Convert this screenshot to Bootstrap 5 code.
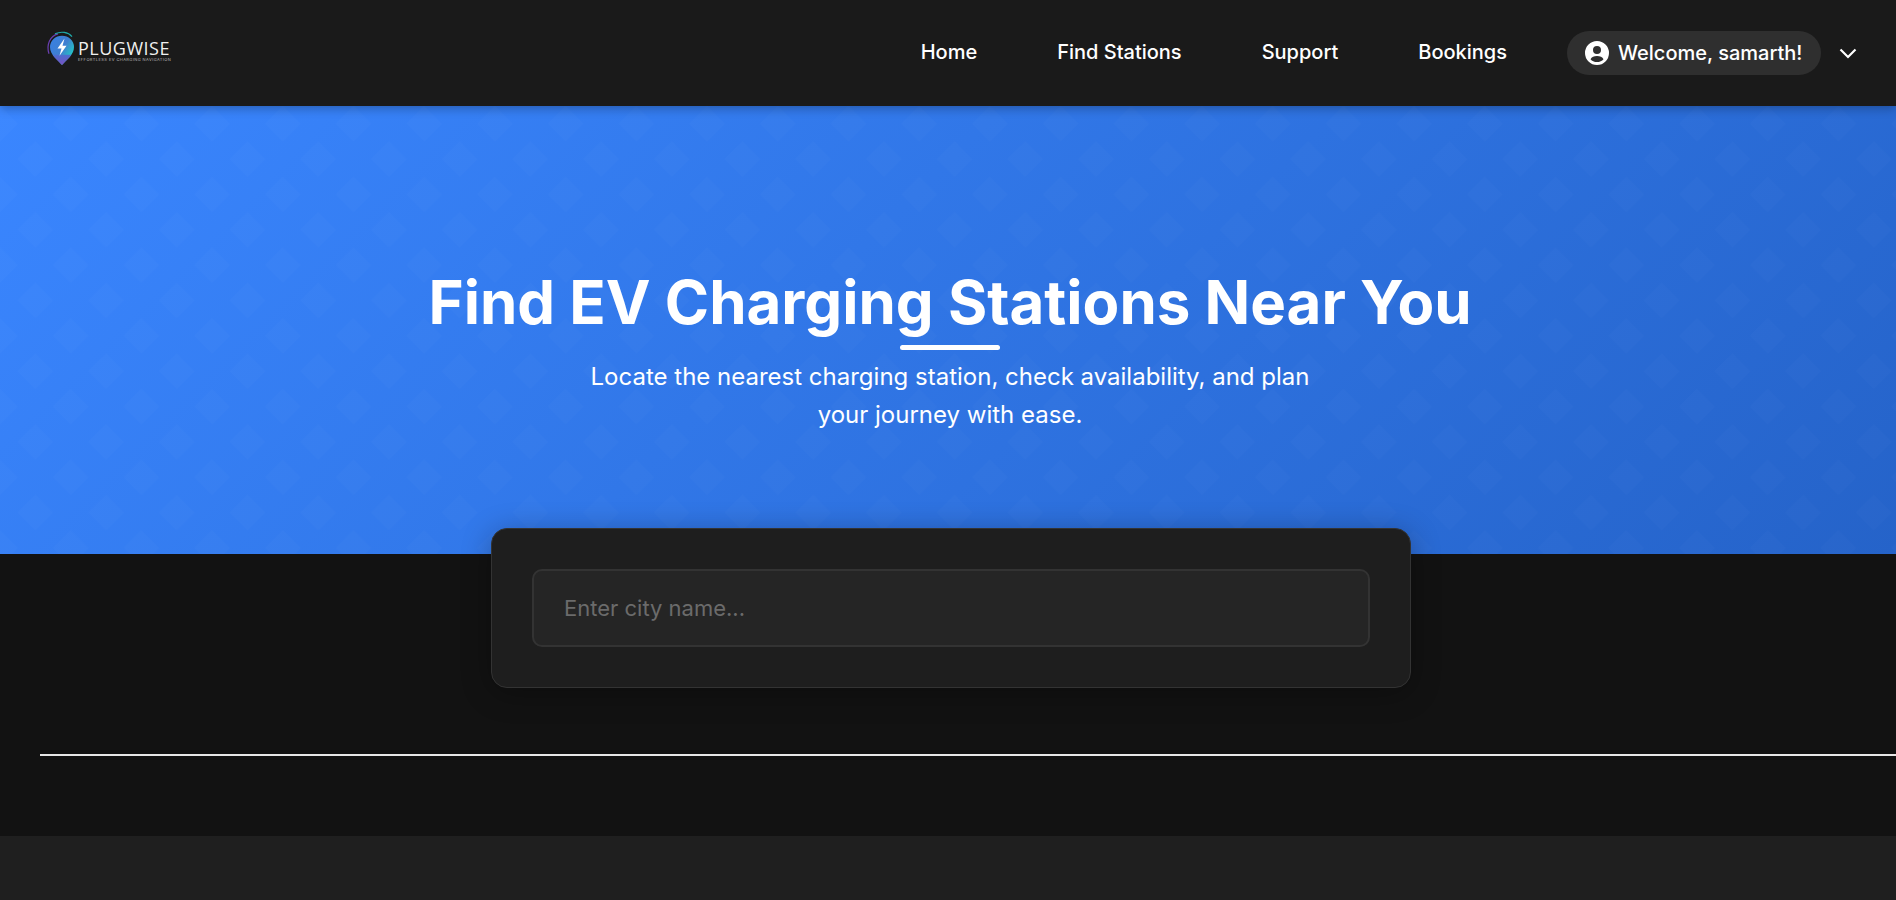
<!DOCTYPE html>
<html lang="en">
<head>
    <meta charset="UTF-8">
    <meta name="viewport" content="width=device-width, initial-scale=1.0">
    <title>Plugwise</title>
    <link href="https://cdn.jsdelivr.net/npm/bootstrap@5.3.0/dist/css/bootstrap.min.css" rel="stylesheet">
    <style>
        body {
            font-family: Inter, "Liberation Sans", sans-serif;
            background: #121212;
            color: #fff;
            overflow-x: hidden;
        }
        .top-bar {
            height: 106px;
            padding: 0 39px 0 46px;
            background: #1a1a1a;
            box-shadow: 0 2px 10px rgba(0, 0, 0, .3);
            position: relative;
            z-index: 5;
        }
        .logo-link { margin-top: -8px; }
        .brand-name {
            font-family: "Open Sans", sans-serif;
            font-size: 18px;
            font-weight: 500;
            line-height: 18px;
            letter-spacing: .5px;
            color: #f0f0f0;
        }
        .brand-tag {
            font-size: 4px;
            line-height: 6px;
            letter-spacing: .42px;
            color: #b8b8b8;
            white-space: nowrap;
        }
        .top-link {
            color: #fff;
            font-size: 20px;
            font-weight: 500;
            line-height: 24px;
            margin-top: -2px;
            text-decoration: none;
        }
        .top-links { gap: 80px; margin-right: 60px; }
        .user-pill {
            height: 44px;
            width: 254px;
            padding-left: 18px;
            gap: 9px;
            background: #2f2f2f;
            border-radius: 22px;
            font-size: 20px;
            font-weight: 500;
        }
        .chevron-btn { margin-left: 18px; width: 18px; }
        .hero {
            height: 448px;
            padding-left: 4px;
            background: linear-gradient(135deg, #3a86ff, #2563c9);
        }
        .hero-pattern { position: absolute; top: 0; left: 0; width: 100%; height: 100%; }
        .hero-title {
            font-size: 60px;
            font-weight: 700;
            line-height: 76px;
            margin: 0;
            position: relative;
        }
        .hero-title::after {
            content: "";
            position: absolute;
            left: 50%;
            bottom: -10px;
            width: 100px;
            height: 5px;
            margin-left: -50px;
            border-radius: 3px;
            background: #fff;
        }
        .hero-sub {
            width: 740px;
            font-size: 24px;
            line-height: 38px;
            margin: 18px 0 0;
        }
        .hero-inner { margin-top: 38px; }
        .search-wrap { padding-left: 6px; }
        .search-box {
            width: 920px;
            height: 160px;
            margin: -26px auto 0;
            padding: 40px;
            background: #1e1e1e;
            border: 1px solid #333;
            border-radius: 16px;
            box-shadow: 0 5px 30px rgba(0, 0, 0, .3);
            position: relative;
        }
        .search-input.form-control {
            height: 78px;
            padding: 0 30px;
            font-size: 22px;
            background: #252525;
            border: 2px solid #333;
            border-radius: 10px;
            color: #fff;
        }
        .search-input.form-control::placeholder { color: #6b6b6b; opacity: 1; }
        .page-rule {
            width: 100%;
            height: 2px;
            margin: 66px 0 0 40px;
            background: #e6e6e6;
            border: 0;
            opacity: 1;
        }
        .page-foot { height: 64px; margin-top: 80px; background: #1f1f1f; }
    </style>
</head>
<body>
    <nav class="navbar top-bar d-flex align-items-center">
        <a class="logo-link d-flex align-items-center text-decoration-none me-auto" href="#">
            <svg width="32" height="36" viewBox="0 0 32 38" preserveAspectRatio="none" class="flex-shrink-0">
                <defs>
                    <linearGradient id="pinFill" x1="0.1" y1="0.1" x2="0.9" y2="0.7">
                        <stop offset="0" stop-color="#3a80e0"/>
                        <stop offset="0.55" stop-color="#3f7fd0"/>
                        <stop offset="1" stop-color="#22c8c4"/>
                    </linearGradient>
                    <linearGradient id="pinLow" x1="0" y1="0" x2="0" y2="1">
                        <stop offset="0" stop-color="#4a6fd0"/>
                        <stop offset="1" stop-color="#7a4fc0"/>
                    </linearGradient>
                </defs>
                <path d="M3 24C0 15 4 5 12 3" fill="none" stroke="#6a3fb0" stroke-width="1.2"/>
                <path d="M9 3C15 0 22 1 26 6" fill="none" stroke="#1fa8a8" stroke-width="1.2"/>
                <path d="M16 36C11 30 4 25 4 17a12 12 0 0 1 24 0C28 25 21 30 16 36Z" fill="url(#pinFill)"/>
                <path d="M16 36C13 32 9 29 6.500 25H25.500C23 29 19 32 16 36Z" fill="url(#pinLow)"/>
                <path d="M18.500 8L11.500 18.500H15.500L13.500 26L20.500 15.500H16.500Z" fill="#fff"/>
            </svg>
            <div class="pt-1">
                <div class="brand-name">PLUGWISE</div>
                <div class="brand-tag">EFFORTLESS EV CHARGING NAVIGATION</div>
            </div>
        </a>
        <div class="d-flex align-items-center top-links">
            <a class="top-link" href="#">Home</a>
            <a class="top-link" href="#">Find Stations</a>
            <a class="top-link" href="#">Support</a>
            <a class="top-link" href="#">Bookings</a>
        </div>
        <div class="d-flex align-items-center user-pill">
            <svg width="24" height="24" viewBox="0 0 24 24">
                <path fill="#fff" fill-rule="evenodd" d="M12 0a12 12 0 1 0 0 24a12 12 0 0 0 0-24ZM12 5a4 4 0 1 1 0 8a4 4 0 0 1 0-8ZM12 15c3 0 5.500 1.200 6.500 3.200C17 20.100 14.700 21 12 21s-5-.9-6.500-2.800C6.500 16.200 9 15 12 15Z"/>
            </svg>
            <span>Welcome, samarth!</span>
        </div>
        <div class="chevron-btn d-flex">
            <svg width="18" height="18" viewBox="0 0 18 18"><path d="M1.500 5.500L9 13L16.500 5.500" fill="none" stroke="#fff" stroke-width="2.200"/></svg>
        </div>
    </nav>

    <section class="hero position-relative overflow-hidden d-flex align-items-center justify-content-center">
        <svg class="hero-pattern">
            <defs>
                <pattern id="diamonds" width="70.71" height="70.71" patternUnits="userSpaceOnUse">
                    <path d="M0 0L17.68 17.68L0 35.36L-17.68 17.68ZM70.71 0L88.39 17.68L70.71 35.36L53.03 17.68ZM35.36 35.36L53.03 53.03L35.36 70.71L17.68 53.03Z" fill="#fff" fill-opacity=".016"/>
                </pattern>
            </defs>
            <rect width="100%" height="100%" fill="url(#diamonds)"/>
        </svg>
        <div class="hero-inner position-relative text-center d-flex flex-column align-items-center">
            <h1 class="hero-title">Find EV Charging Stations Near You</h1>
            <p class="hero-sub">Locate the nearest charging station, check availability, and plan your journey with ease.</p>
        </div>
    </section>

    <div class="search-wrap">
        <div class="search-box">
            <input type="text" class="form-control search-input" placeholder="Enter city name...">
        </div>
    </div>

    <hr class="page-rule">

    <footer class="page-foot"></footer>

    <script src="https://cdn.jsdelivr.net/npm/bootstrap@5.3.0/dist/js/bootstrap.bundle.min.js"></script>
</body>
</html>
